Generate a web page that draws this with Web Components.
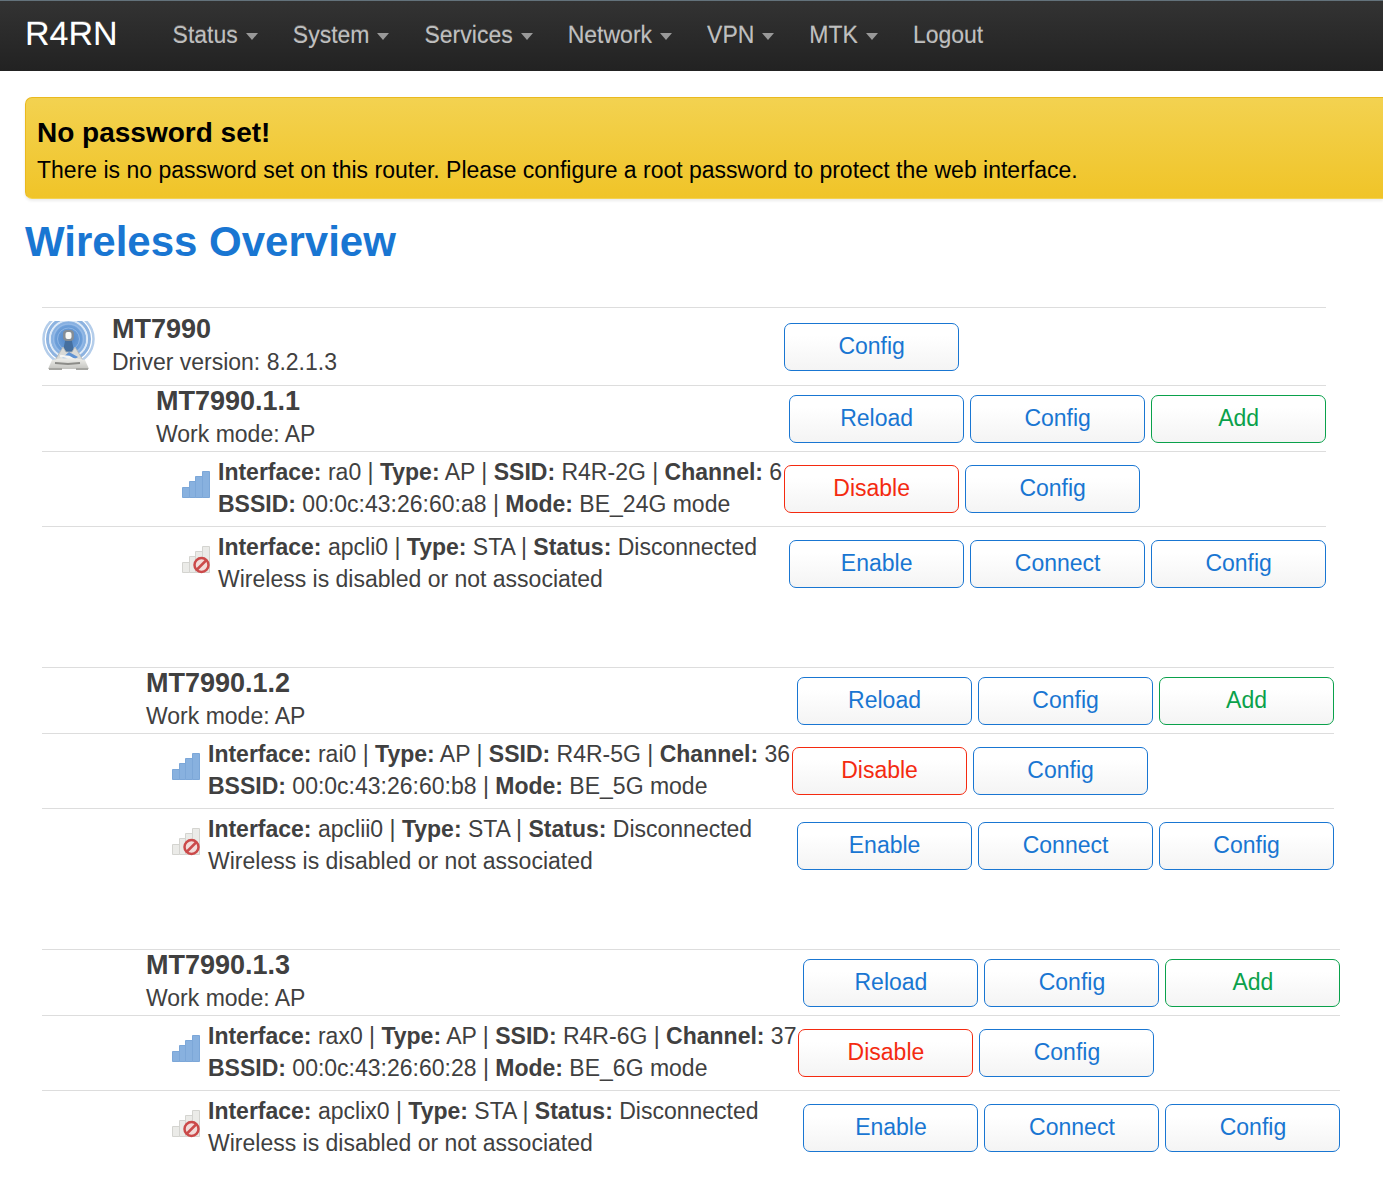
<!DOCTYPE html>
<html lang="en">
<head>
<meta charset="utf-8">
<title>R4RN - Wireless Overview</title>
<style>
  body {
    margin: 0;
    background: #fff;
    color: #404040;
    font: 23px/32px "Liberation Sans", Arial, sans-serif;
    overflow-x: hidden;
  }
  main { padding: 26px 0 16px 25px; }
  h1 { margin: 15px 0 37px; font-size: 42px; line-height: 56px; color: #1976d2; }
  .radios { display: flex; flex-direction: column; align-items: flex-start; gap: 66px; padding-left: 17px; }
</style>
</head>
<body>
<top-bar brand="R4RN">
  <nav-link menu>Status</nav-link>
  <nav-link menu>System</nav-link>
  <nav-link menu>Services</nav-link>
  <nav-link menu>Network</nav-link>
  <nav-link menu>VPN</nav-link>
  <nav-link menu>MTK</nav-link>
  <nav-link>Logout</nav-link>
</top-bar>
<main>
  <alert-message>
    <span slot="title">No password set!</span>
    There is no password set on this router. Please configure a root password to protect the web interface.
  </alert-message>
  <h1>Wireless Overview</h1>
  <div class="radios">
    <wifi-group class="first">
      <wifi-device name="MT7990" icon>Driver version: 8.2.1.3
        <act-button slot="actions">Config</act-button>
      </wifi-device>
      <wifi-device name="MT7990.1.1">Work mode: AP
        <act-button slot="actions">Reload</act-button>
        <act-button slot="actions">Config</act-button>
        <act-button slot="actions" kind="add">Add</act-button>
      </wifi-device>
      <wifi-iface>
        <span><b>Interface:</b> ra0 | <b>Type:</b> AP | <b>SSID:</b> R4R-2G | <b>Channel:</b> 6</span>
        <span><b>BSSID:</b> 00:0c:43:26:60:a8 | <b>Mode:</b> BE_24G mode</span>
        <act-button slot="actions" kind="remove">Disable</act-button>
        <act-button slot="actions">Config</act-button>
      </wifi-iface>
      <wifi-iface off>
        <span><b>Interface:</b> apcli0 | <b>Type:</b> STA | <b>Status:</b> Disconnected</span>
        <span>Wireless is disabled or not associated</span>
        <act-button slot="actions">Enable</act-button>
        <act-button slot="actions">Connect</act-button>
        <act-button slot="actions">Config</act-button>
      </wifi-iface>
    </wifi-group>
    <wifi-group>
      <wifi-device name="MT7990.1.2">Work mode: AP
        <act-button slot="actions">Reload</act-button>
        <act-button slot="actions">Config</act-button>
        <act-button slot="actions" kind="add">Add</act-button>
      </wifi-device>
      <wifi-iface>
        <span><b>Interface:</b> rai0 | <b>Type:</b> AP | <b>SSID:</b> R4R-5G | <b>Channel:</b> 36</span>
        <span><b>BSSID:</b> 00:0c:43:26:60:b8 | <b>Mode:</b> BE_5G mode</span>
        <act-button slot="actions" kind="remove">Disable</act-button>
        <act-button slot="actions">Config</act-button>
      </wifi-iface>
      <wifi-iface off>
        <span><b>Interface:</b> apclii0 | <b>Type:</b> STA | <b>Status:</b> Disconnected</span>
        <span>Wireless is disabled or not associated</span>
        <act-button slot="actions">Enable</act-button>
        <act-button slot="actions">Connect</act-button>
        <act-button slot="actions">Config</act-button>
      </wifi-iface>
    </wifi-group>
    <wifi-group>
      <wifi-device name="MT7990.1.3">Work mode: AP
        <act-button slot="actions">Reload</act-button>
        <act-button slot="actions">Config</act-button>
        <act-button slot="actions" kind="add">Add</act-button>
      </wifi-device>
      <wifi-iface>
        <span><b>Interface:</b> rax0 | <b>Type:</b> AP | <b>SSID:</b> R4R-6G | <b>Channel:</b> 37</span>
        <span><b>BSSID:</b> 00:0c:43:26:60:28 | <b>Mode:</b> BE_6G mode</span>
        <act-button slot="actions" kind="remove">Disable</act-button>
        <act-button slot="actions">Config</act-button>
      </wifi-iface>
      <wifi-iface off>
        <span><b>Interface:</b> apclix0 | <b>Type:</b> STA | <b>Status:</b> Disconnected</span>
        <span>Wireless is disabled or not associated</span>
        <act-button slot="actions">Enable</act-button>
        <act-button slot="actions">Connect</act-button>
        <act-button slot="actions">Config</act-button>
      </wifi-iface>
    </wifi-group>
  </div>
</main>
<script>
const define = (name, render) => customElements.define(name, class extends HTMLElement {
  constructor() { super(); this.attachShadow({ mode: 'open' }); }
  connectedCallback() { this.shadowRoot.innerHTML = render(this); }
});

define('top-bar', el => `
  <style>
    :host { display: block; background: linear-gradient(#333, #222); border-top: 1px solid #63727b; color: #bfbfbf; }
    nav { display: flex; align-items: center; height: 70px; padding: 0 25px; box-sizing: border-box; text-shadow: 0 -1px 0 rgba(255,255,255,.25); }
    .brand { color: #fff; font-size: 34px; line-height: 40px; margin-right: 55px; padding-bottom: 6px; text-decoration: none; }
    .items { display: flex; gap: 35px; padding-bottom: 2px; }
  </style>
  <nav><a class="brand" href="#">${el.getAttribute('brand')}</a><div class="items"><slot></slot></div></nav>`);

define('nav-link', el => `
  <style>
    :host { display: block; }
    a { display: flex; align-items: center; gap: 8px; color: inherit; text-decoration: none; }
    i { border: solid transparent; border-width: 7px 6px 0; border-top-color: #999; margin-top: 2px; }
  </style>
  <a href="#"><slot></slot>${el.hasAttribute('menu') ? '<i></i>' : ''}</a>`);

define('alert-message', () => `
  <style>
    :host { display: block; padding: 19px 11px 12px; color: #000;
      background: linear-gradient(#f3d250, #f0c428); border: 1px solid #eab91f; border-bottom-color: #f3d250;
      border-right: 0; border-radius: 7px 0 0 7px; box-shadow: 0 2px 3px rgba(0,0,0,.08); }
    h4 { margin: 0 0 5px; font-size: 28px; line-height: 32px; }
    p { margin: 0; }
  </style>
  <h4><slot name="title"></slot></h4><p><slot></slot></p>`);

define('act-button', el => `
  <style>
    :host { display: block; --tone: #1976d2; }
    :host([kind=add]) { --tone: #0aa14b; }
    :host([kind=remove]) { --tone: #f42a10; }
    button { width: 175px; height: 48px; padding: 0 0 2px; border: 1px solid var(--tone); border-radius: 7px;
      color: var(--tone); background: linear-gradient(#fff, #fff 25%, #f4f4f4); font: inherit; cursor: pointer; }
  </style>
  <button type="button"><slot></slot></button>`);

define('wifi-group', () => `
  <style>
    :host { display: grid; grid-template-columns: max-content 542px; --indent: 104px; }
    :host(.first) { --indent: 114px; }
  </style>
  <slot></slot>`);

const rowStyle = `
  :host { display: grid; grid-template-columns: subgrid; grid-column: 1 / -1; align-items: center; border-top: 1px solid #ddd; }
  .info { display: flex; align-items: center; }
  .actions { display: flex; gap: 6px; }
  .actions.full { justify-content: flex-end; }`;
const actions = el => `<div class="actions ${el.querySelectorAll('act-button').length > 2 ? 'full' : ''}"><slot name="actions"></slot></div>`;

const tower = `<svg width="54" height="54" viewBox="0 0 54 54" aria-hidden="true">
  <defs>
    <radialGradient id="sky" cx="26.500" cy="20" r="20" gradientUnits="userSpaceOnUse"><stop offset="0" stop-color="#4d83c6"/><stop offset=".65" stop-color="#6c9ed8"/><stop offset="1" stop-color="#a3c3e9"/></radialGradient>
    <clipPath id="waves"><path d="M0 2h54v27L44 41H9L0 29z"/></clipPath>
    <linearGradient id="metal" x2="0" y2="1"><stop offset="0" stop-color="#f0f0ec"/><stop offset="1" stop-color="#c4c4c0"/></linearGradient>
  </defs>
  <g clip-path="url(#waves)" fill="none">
    <circle cx="26.500" cy="20" r="18" fill="url(#sky)"/>
    <circle cx="26.500" cy="20" r="11" stroke="#8fb6e4"/>
    <circle cx="26.500" cy="20" r="15" stroke="#94b9e6" stroke-width="1.500"/>
    <circle cx="26.500" cy="20" r="18.500" stroke="#dce9f7" stroke-width="1.500"/>
    <circle cx="26.500" cy="20" r="21" stroke="#8db3e0" stroke-width="3"/>
    <circle cx="26.500" cy="20" r="25" stroke="#b4cdea" stroke-width="2.500"/>
  </g>
  <path d="M23.500 20h6l3 14h-12z" fill="#456f9f"/>
  <path d="M21 28l-9 15h30l-9-15-3 5h-6z" fill="#d9dad7" stroke="#b4b7b7" stroke-width=".8"/>
  <path d="M20 39l7-6 9 5-6 4z" fill="#5f93d4"/>
  <path d="M18 37l9 1 9 5" stroke="#f5f5f2" stroke-width="2.500" fill="none"/>
  <path d="M10 41q16-4 33 0l4 9H6z" fill="url(#metal)"/>
  <path d="M13 44l13 1 12-1" stroke="#8c8c88" stroke-width="1.800" fill="none"/>
  <path d="M7 50h13M34 50h12" stroke="#a6a6a2" stroke-width="2"/>
  <rect x="21" y="11" width="11" height="11" rx="4" fill="#858d95"/>
  <rect x="23.500" y="13" width="6" height="7" rx="2" fill="#fafaf6"/>
</svg>`;

define('wifi-device', el => `
  <style>${rowStyle}
    .info { padding-left: var(--indent); }
    :host([icon]) .info { padding: 6px 0; gap: 16px; }
    svg { margin-bottom: 2px; }
    h3 { margin: 0; font-size: 27px; line-height: 31px; }
    p { margin: 0; line-height: 34px; }
  </style>
  <div class="info">${el.hasAttribute('icon') ? tower : ''}<div><h3>${el.getAttribute('name')}</h3><p><slot></slot></p></div></div>
  ${actions(el)}`);

const bars = (fill, edge, mark = '') => `<svg width="28" height="36" viewBox="0 0 28 36" aria-hidden="true">
  <g fill="${fill}" stroke="${edge}">
    <path d="M.5 17.500h7v10h-7z"/><path d="M7.500 11.500h6v16h-6z"/><path d="M13.500 6.500h7v21h-7z"/><path d="M20.500 1.500h7v26h-7z"/>
  </g>${mark}</svg>`;
const signalOn = bars('#88b1df', '#7ca7d8');
const signalOff = bars('#ebebe8', '#d4d4d0', `
  <circle cx="19.500" cy="20" r="7" fill="#f2dcda" stroke="#cb4a4a" stroke-width="2.500"/>
  <path d="M14.500 25l10-10" stroke="#cb4a4a" stroke-width="2.500"/>`);

define('wifi-iface', el => `
  <style>${rowStyle}
    .info { padding: 4px 2px 6px 0; margin-left: calc(var(--indent) + 26px); gap: 8px; }
    .lines { display: flex; flex-direction: column; white-space: nowrap; }
  </style>
  <div class="info">${el.hasAttribute('off') ? signalOff : signalOn}<div class="lines"><slot></slot></div></div>
  ${actions(el)}`);
</script>
</body>
</html>
